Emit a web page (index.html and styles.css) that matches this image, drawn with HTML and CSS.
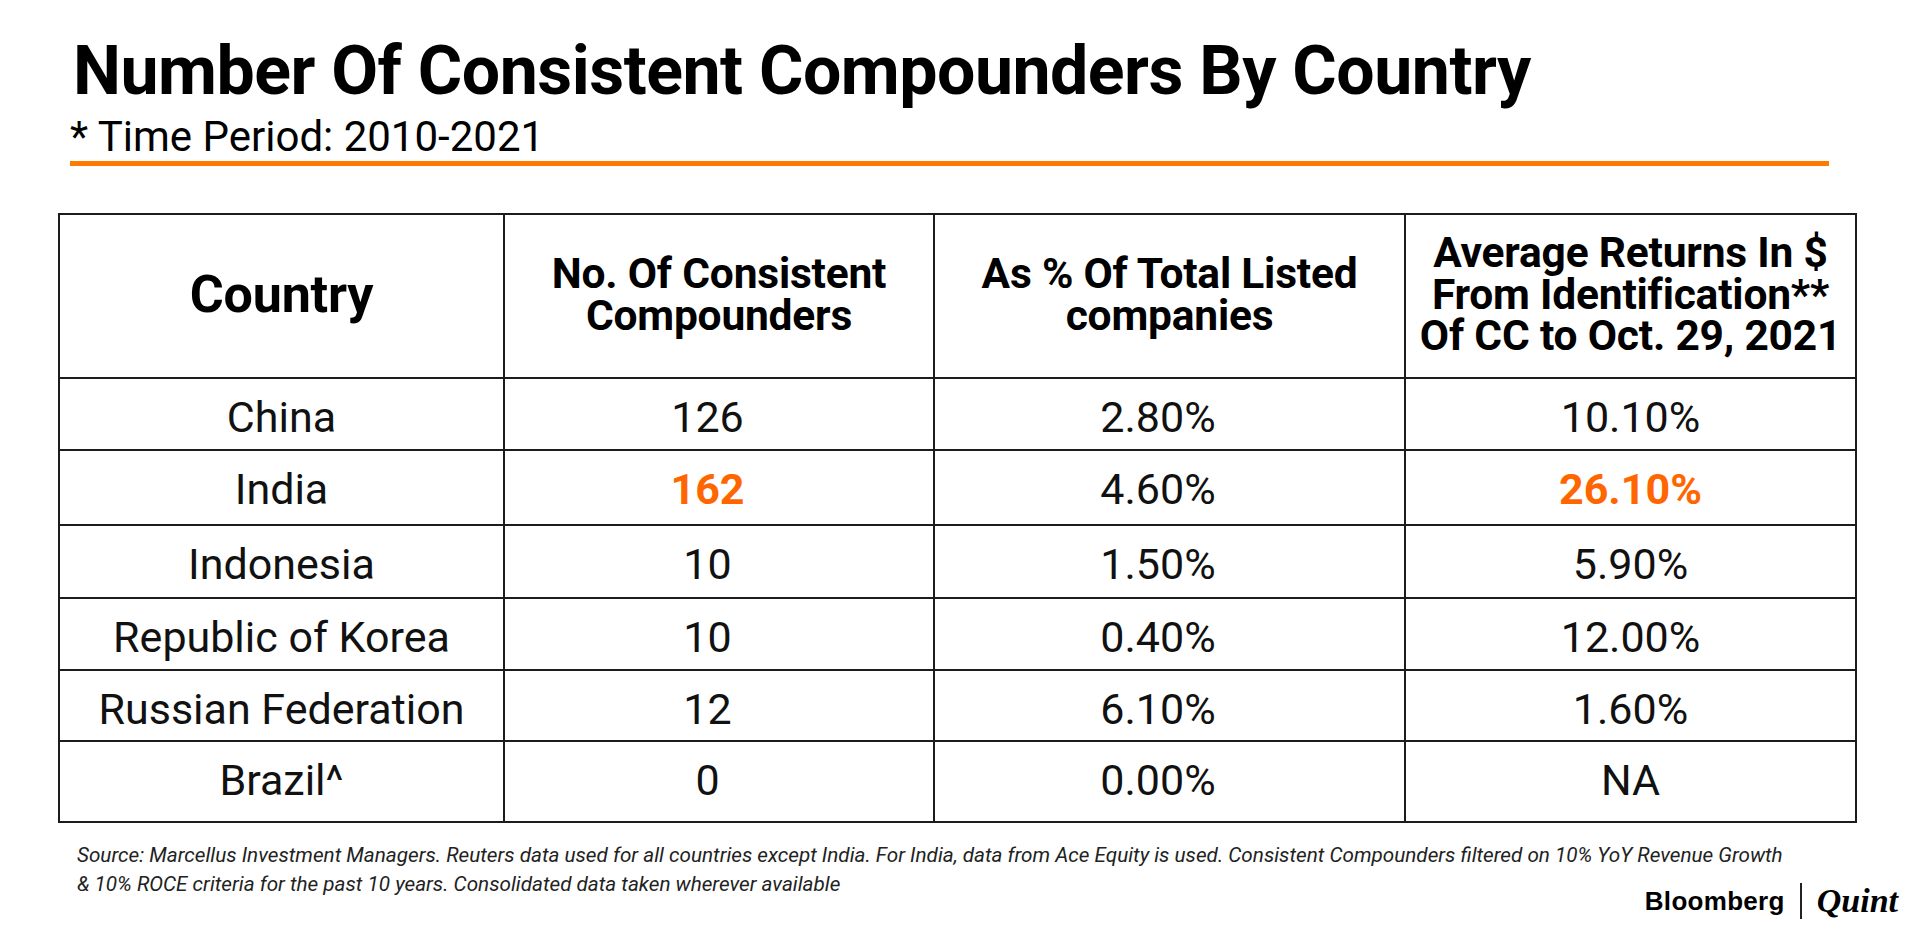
FILE: index.html
```html
<!DOCTYPE html>
<html lang="en">
<head>
<meta charset="utf-8">
<title>Number Of Consistent Compounders By Country</title>
<link rel="stylesheet" href="styles.css">
</head>
<body>
<header class="head">
  <h1 class="title">Number Of Consistent Compounders By Country</h1>
  <p class="subtitle">* Time Period: 2010-2021</p>
</header>
<table class="data">
  <colgroup>
    <col class="c1"><col class="c2"><col class="c3"><col class="c4">
  </colgroup>
  <thead>
    <tr class="hrow">
      <th class="big">Country</th>
      <th>No. Of Consistent<br>Compounders</th>
      <th>As % Of Total Listed<br>companies</th>
      <th>Average Returns In $<br>From Identification**<br>Of CC to Oct. 29, 2021</th>
    </tr>
  </thead>
  <tbody>
    <tr class="r1"><td>China</td><td class="num">126</td><td class="num">2.80%</td><td>10.10%</td></tr>
    <tr class="r2"><td>India</td><td class="num hl">162</td><td class="num">4.60%</td><td class="hl">26.10%</td></tr>
    <tr class="r3"><td>Indonesia</td><td class="num">10</td><td class="num">1.50%</td><td>5.90%</td></tr>
    <tr class="r4"><td>Republic of Korea</td><td class="num">10</td><td class="num">0.40%</td><td>12.00%</td></tr>
    <tr class="r5"><td>Russian Federation</td><td class="num">12</td><td class="num">6.10%</td><td>1.60%</td></tr>
    <tr class="r6"><td>Brazil^</td><td class="num">0</td><td class="num">0.00%</td><td>NA</td></tr>
  </tbody>
</table>
<footer class="foot">
  <p class="source">Source: Marcellus Investment Managers. Reuters data used for all countries except India. For India, data from Ace Equity is used. Consistent Compounders filtered on 10% YoY Revenue Growth<br>&amp; 10% ROCE criteria for the past 10 years. Consolidated data taken wherever available</p>
  <div class="brand">
    <span class="bb">Bloomberg</span>
    <span class="divider"></span>
    <span class="quint">Quint</span>
  </div>
</footer>
</body>
</html>
```
FILE: styles.css
```css
html, body {
  margin: 0;
  padding: 0;
  background: #ffffff;
}
body {
  width: 1920px;
  height: 935px;
  overflow: hidden;
  font-family: Roboto, "Liberation Sans", sans-serif;
  color: #000;
}
.head {
  margin-left: 70px;
  width: 1759px;
  padding-top: 37px;
  padding-bottom: 4px;
  border-bottom: 5px solid #ff7a00;
}
.title {
  margin: 0 0 0 3px;
  font-size: 68px;
  line-height: 68px;
  font-weight: 700;
  letter-spacing: -0.5px;
}
.subtitle {
  margin: 11px 0 0 0;
  font-size: 42px;
  line-height: 41px;
  font-weight: 400;
}
.data {
  margin: 47px 0 0 58px;
  border-collapse: collapse;
  table-layout: fixed;
  width: 1797px;
}
.c1 { width: 445px; }
.c2 { width: 430px; }
.c3 { width: 471px; }
.c4 { width: 451px; }
.data th, .data td {
  border: 2px solid #1c1c1c;
  text-align: center;
  padding: 0;
}
.data th {
  vertical-align: middle;
  padding-bottom: 3px;
  font-size: 42.5px;
  line-height: 41.5px;
  font-weight: 700;
  letter-spacing: -0.2px;
}
.data th.big {
  font-size: 52px;
}
.hrow { height: 164px; }
.data td {
  vertical-align: top;
  padding-top: 14px;
  font-size: 43px;
  line-height: 48px;
  font-weight: 400;
  color: #111;
}
.data td.num {
  padding-right: 23px;
}
.data tr.r1 { height: 72px; }
.data tr.r2 { height: 75px; }
.data tr.r3 { height: 73px; }
.data tr.r4 { height: 72px; }
.data tr.r5 { height: 71px; }
.data tr.r6 { height: 81px; }
.data td.hl {
  color: #ff6600;
  font-weight: 700;
}
.foot {
  display: grid;
  margin-top: 18px;
}
.source {
  grid-area: 1 / 1;
  margin: 0 0 0 77px;
  font-size: 20.7px;
  line-height: 29px;
  font-style: italic;
  color: #222;
}
.brand {
  grid-area: 1 / 1;
  justify-self: end;
  align-self: start;
  margin: 41px 22px 0 0;
  display: flex;
  align-items: center;
  gap: 15px;
}
.bb {
  font-family: "Liberation Sans", Arial, sans-serif;
  font-weight: 700;
  font-size: 26px;
  letter-spacing: 0.3px;
  color: #000;
}
.divider {
  width: 2px;
  height: 36px;
  background: #222;
}
.quint {
  font-family: "Liberation Serif", "Times New Roman", serif;
  font-style: italic;
  font-weight: 700;
  font-size: 34px;
  color: #000;
}
```
